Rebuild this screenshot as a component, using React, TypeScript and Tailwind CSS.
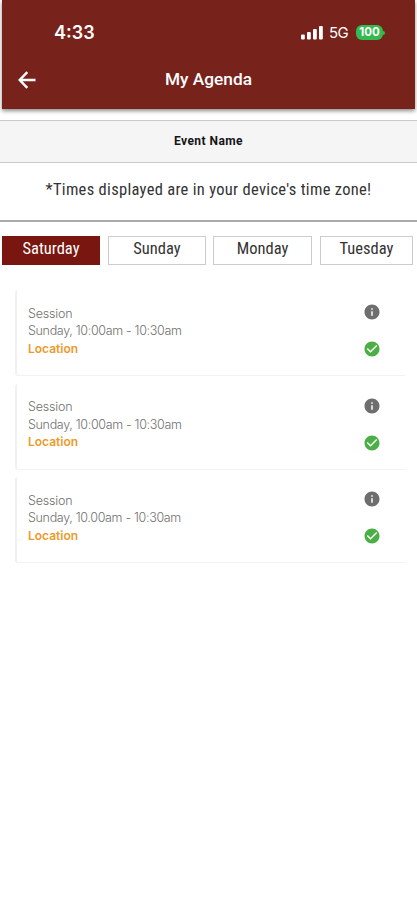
import React from 'react';
import { MdCheckCircle, MdInfo } from 'react-icons/md';

const days = [
  { name: 'Saturday', width: 'w-[98px]' },
  { name: 'Sunday', width: 'w-[98px] ml-[8px]' },
  { name: 'Monday', width: 'w-[99px] ml-[7px]' },
  { name: 'Tuesday', width: 'w-[93px] ml-[8px]' },
];

const sessions = [
  { title: 'Session', time: 'Sunday, 10:00am - 10:30am', location: 'Location' },
  { title: 'Session', time: 'Sunday, 10:00am - 10:30am', location: 'Location' },
  { title: 'Session', time: 'Sunday, 10.00am - 10:30am', location: 'Location' },
];

const StatusBar: React.FC = () => (
  <div className="flex h-[65px] items-center justify-between pl-[52px] pr-[30px]">
    <span className="text-[18px] font-semibold leading-none font-['Inter',sans-serif]">4:33</span>
    <div className="flex items-center">
      <svg width="22" height="15" viewBox="0 0 22 15" fill="currentColor">
        <rect x="0" y="9.5" width="3.8" height="5" rx="1" />
        <rect x="6" y="7" width="3.8" height="7.5" rx="1" />
        <rect x="12" y="4" width="3.8" height="10.5" rx="1" />
        <rect x="18" y="1" width="3.8" height="13.5" rx="1" />
      </svg>
      <span className="ml-[6px] w-[21px] text-[15px] leading-none tracking-[-0.5px] font-['Inter',sans-serif]">5G</span>
      <div className="ml-[6px] flex h-[15px] w-[27px] items-center justify-center rounded-[6px] bg-[#34bb50] text-[11.5px] font-bold leading-none font-['Inter',sans-serif]">
        100
      </div>
      <div className="h-[4px] w-[2px] rounded-r-full bg-[#34bb50]" />
    </div>
  </div>
);

const App: React.FC = () => {
  return (
    <div className="h-[900px] w-[417px] overflow-hidden bg-white font-['Roboto',sans-serif]">
      <header className="mx-[2px] h-[109px] bg-[#78221c] text-white shadow-[0_2px_4px_rgba(0,0,0,0.45)]">
        <StatusBar />
        <div className="grid h-[29px] grid-cols-[50px_1fr_50px] items-center">
          <svg className="ml-[16px]" width="18" height="18" viewBox="0 0 18 18" fill="none" stroke="currentColor" strokeWidth="2.4">
            <path d="M17.5 9H2M9.3 1.2L1.7 9l7.6 7.8" />
          </svg>
          <h1 className="text-center text-[17.3px] font-medium">My Agenda</h1>
        </div>
      </header>

      <div className="mt-[11px] flex h-[43px] items-center justify-center border-y border-[#c9c9c9] bg-[#f5f5f5] pb-[2px] text-[12px] font-bold tracking-[0.45px] text-[#161616]">
        Event Name
      </div>

      <div className="flex h-[59px] items-center justify-center border-b-2 border-[#aaaaaa] pb-[2px] text-[16.5px] tracking-[0.3px] text-[#333333] [font-stretch:75%]">
        <span className="whitespace-nowrap">*Times displayed are in your device's time zone!</span>
      </div>

      <div className="flex px-[2px] pt-[14px] text-[16.5px] [font-stretch:75%]">
        {days.map((day, index) => (
          <button
            key={day.name}
            className={`flex h-[29px] shrink-0 items-center justify-center pb-[2px] ${day.width} ${
              index === 0 ? 'bg-[#78160f] text-white' : 'border border-[#cccccc] bg-white text-[#333333]'
            }`}
          >
            {day.name}
          </button>
        ))}
      </div>

      <main className="ml-[15px] mt-[25px] flex w-[390px] flex-col gap-[7.5px]">
        {sessions.map((session, index) => (
          <div
            key={index}
            className="flex h-[86px] justify-between rounded-l-[3px] border-b border-l-2 border-b-[#f2f2f2] border-l-[#f1f1f1] bg-white pl-[11px] pr-[24px] pt-[14px] leading-[17.6px]"
          >
            <div className="mt-[0.8px] text-[12.5px] font-light text-[#707070] font-['Inter',sans-serif]">
              <p className="tracking-[-0.2px]">{session.title}</p>
              <p className="tracking-[-0.32px]">{session.time}</p>
              <p className="text-[12px] font-semibold text-[#ec9a2a]">{session.location}</p>
            </div>
            <div className="-mt-px flex flex-col gap-[19px]">
              <MdInfo className="size-[18px] text-[#6e6e6e]" />
              <MdCheckCircle className="size-[18px] text-[#4caf45]" />
            </div>
          </div>
        ))}
      </main>
    </div>
  );
};

export default App;
